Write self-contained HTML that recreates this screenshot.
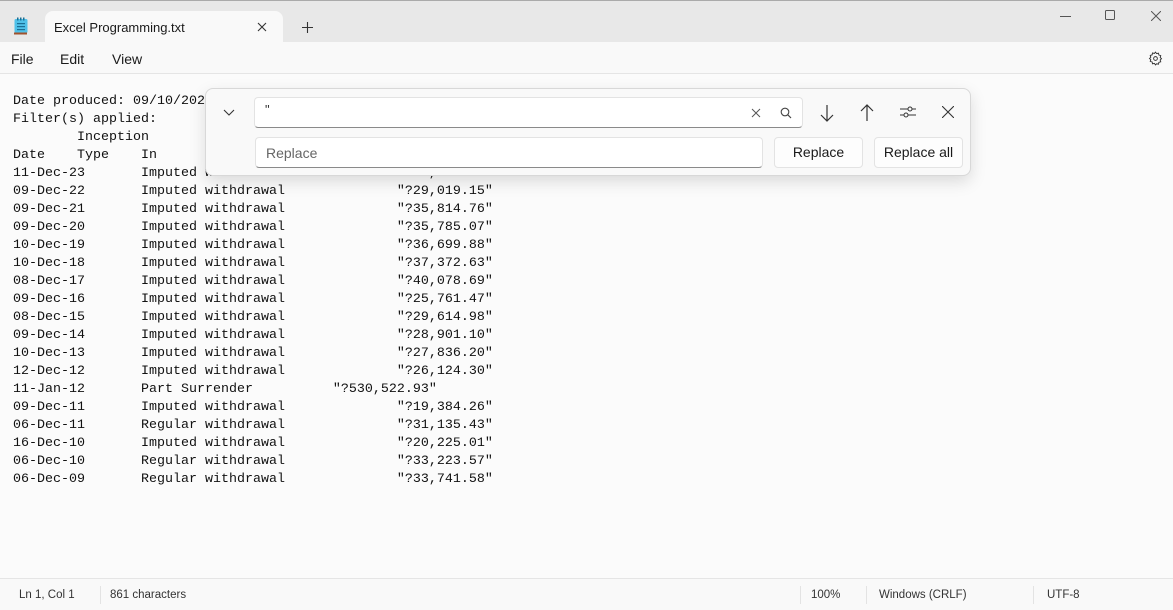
<!DOCTYPE html>
<html><head><meta charset="utf-8"><style>
*{margin:0;padding:0;box-sizing:border-box}
body{width:1173px;height:610px;overflow:hidden;background:#fbfbfb;font-family:"Liberation Sans",sans-serif;position:relative}
.tabbar{position:absolute;left:0;top:0;width:1173px;height:42px;background:#e8e8e8;border-top:1px solid #aaa}
.tab{position:absolute;left:45px;top:10px;width:238px;height:32px;background:#f9f9f9;border-radius:8px 8px 0 0}
.tab span{position:absolute;left:9px;top:9px;font-size:13px;color:#1a1a1a}
.menubar{position:absolute;left:0;top:42px;width:1173px;height:32px;background:#f9f9f9;border-bottom:1px solid #e5e5e5}
.menubar span{position:absolute;top:9px;font-size:14px;color:#1a1a1a}
pre{position:absolute;left:13px;top:93px;font-family:"Liberation Mono",monospace;font-size:13.33px;line-height:18px;color:#111}
.status{position:absolute;left:0;top:578px;width:1173px;height:32px;background:#f9f9f9;border-top:1px solid #e5e5e5;font-size:11.5px;color:#333}
.status span{position:absolute;top:10px}
.sep{position:absolute;top:7px;width:1px;height:18px;background:#e3e3e3}
.panel{position:absolute;left:205px;top:88px;width:766px;height:88px;background:#f9f9f9;border:1px solid #d8d8d8;border-radius:8px;box-shadow:0 6px 16px rgba(0,0,0,.13)}
.inp{position:absolute;background:#fff;border:1px solid #e3e3e3;border-bottom:1px solid #8a8a8a;border-radius:4px}
.btn{position:absolute;background:#fdfdfd;border:1px solid #e3e3e3;border-radius:4px;font-size:14px;color:#1a1a1a;text-align:center;line-height:29px}
</style></head><body>
<div class="tabbar">
 <svg style="position:absolute;left:14px;top:16px" width="14" height="18" viewBox="0 0 14 18"><rect x="0.5" y="2" width="13" height="14" rx="1.5" fill="#4fc1e9"/><rect x="0" y="15.5" width="13" height="2" fill="#a0522d"/><rect x="3" y="0.5" width="1.5" height="3" fill="#1b6f95"/><rect x="6" y="0.5" width="1.5" height="3" fill="#1b6f95"/><rect x="9" y="0.5" width="1.5" height="3" fill="#1b6f95"/><rect x="3" y="6" width="8" height="1.2" fill="#1b6f95"/><rect x="3" y="9" width="8" height="1.2" fill="#1b6f95"/><rect x="3" y="12" width="8" height="1.2" fill="#1b6f95"/></svg>
 <div class="tab"><span>Excel Programming.txt</span>
 <svg style="position:absolute;left:212px;top:11px" width="10" height="10" viewBox="0 0 10 10"><path d="M1 1L9 9M9 1L1 9" stroke="#333" stroke-width="1.1"/></svg></div>
 <svg style="position:absolute;left:302px;top:21px" width="11" height="11" viewBox="0 0 11 11"><path d="M5.5 0V11M0 5.5H11" stroke="#333" stroke-width="1.1"/></svg>
 <svg style="position:absolute;left:1060px;top:15px" width="11" height="2"><path d="M0 0.5H11" stroke="#555"/></svg>
 <svg style="position:absolute;left:1105px;top:9px" width="10" height="10"><rect x="0.5" y="0.5" width="9" height="9" rx="1" fill="none" stroke="#555"/></svg>
 <svg style="position:absolute;left:1151px;top:10px" width="10" height="10"><path d="M0 0L10 10M10 0L0 10" stroke="#555"/></svg>
</div>
<div class="menubar"><span style="left:11px">File</span><span style="left:60px">Edit</span><span style="left:112px">View</span>
 <svg style="position:absolute;left:1148px;top:9px" width="15" height="15" viewBox="0 0 16 16"><path d="M8 1.2l1.2 1.6 2-.5.4 2 2 .6-.6 2 1.4 1.3-1.4 1.4.6 1.9-2 .6-.4 2-2-.5L8 14.8l-1.2-1.6-2 .5-.4-2-2-.6.6-1.900L1.6 8 3 6.7l-.6-2 2-.6.4-2 2 .5z" fill="none" stroke="#333" stroke-width="1"/><circle cx="8" cy="8" r="2" fill="none" stroke="#333"/></svg>
</div>
<pre>Date produced: 09/10/2023
Filter(s) applied:
        Inception
Date    Type    In
11-Dec-23       Imputed withdrawal              "?38,554.47"
09-Dec-22       Imputed withdrawal              "?29,019.15"
09-Dec-21       Imputed withdrawal              "?35,814.76"
09-Dec-20       Imputed withdrawal              "?35,785.07"
10-Dec-19       Imputed withdrawal              "?36,699.88"
10-Dec-18       Imputed withdrawal              "?37,372.63"
08-Dec-17       Imputed withdrawal              "?40,078.69"
09-Dec-16       Imputed withdrawal              "?25,761.47"
08-Dec-15       Imputed withdrawal              "?29,614.98"
09-Dec-14       Imputed withdrawal              "?28,901.10"
10-Dec-13       Imputed withdrawal              "?27,836.20"
12-Dec-12       Imputed withdrawal              "?26,124.30"
11-Jan-12       Part Surrender          "?530,522.93"
09-Dec-11       Imputed withdrawal              "?19,384.26"
06-Dec-11       Regular withdrawal              "?31,135.43"
16-Dec-10       Imputed withdrawal              "?20,225.01"
06-Dec-10       Regular withdrawal              "?33,223.57"
06-Dec-09       Regular withdrawal              "?33,741.58"</pre>
<div class="panel">
 <svg style="position:absolute;left:17px;top:20px" width="12" height="7" viewBox="0 0 12 7"><path d="M1 1l5 5 5-5" fill="none" stroke="#333" stroke-width="1.1"/></svg>
 <div class="inp" style="left:48px;top:8px;width:549px;height:31px"><span style="position:absolute;left:10px;top:4px;font-size:13px;color:#333">"</span>
  <svg style="position:absolute;left:496px;top:10px" width="10" height="10"><path d="M1 1L9 9M9 1L1 9" stroke="#555"/></svg>
  <svg style="position:absolute;left:525px;top:9px" width="12" height="12"><circle cx="5" cy="5" r="3.8" fill="none" stroke="#444" stroke-width="1.1"/><path d="M7.8 7.8L11 11" stroke="#444" stroke-width="1.2"/></svg></div>
 <svg style="position:absolute;left:614px;top:15px" width="14" height="18" viewBox="0 0 14 18"><path d="M7 1V17M1 11l6 6 6-6" fill="none" stroke="#333" stroke-width="1.2"/></svg>
 <svg style="position:absolute;left:654px;top:15px" width="14" height="18" viewBox="0 0 14 18"><path d="M7 17V1M1 7l6-6 6 6" fill="none" stroke="#333" stroke-width="1.2"/></svg>
 <svg style="position:absolute;left:694px;top:15px" width="16" height="16" viewBox="0 0 16 16"><path d="M0 5H16M0 11H16" stroke="#333" stroke-width="1.1"/><circle cx="10" cy="5" r="2" fill="#f9f9f9" stroke="#333"/><circle cx="6" cy="11" r="2" fill="#f9f9f9" stroke="#333"/></svg>
 <svg style="position:absolute;left:736px;top:17px" width="12" height="12"><path d="M0 0L12 12M12 0L0 12" stroke="#333" stroke-width="1.1"/></svg>
 <div class="inp" style="left:49px;top:48px;width:508px;height:31px"><span style="position:absolute;left:10px;top:7px;font-size:14px;color:#666">Replace</span></div>
 <div class="btn" style="left:568px;top:48px;width:89px;height:31px">Replace</div>
 <div class="btn" style="left:668px;top:48px;width:89px;height:31px">Replace all</div>
</div>
<div class="status">
 <span style="left:19px">Ln 1, Col 1</span><div class="sep" style="left:100px"></div>
 <span style="left:110px">861 characters</span>
 <div class="sep" style="left:800px"></div><span style="left:811px">100%</span>
 <div class="sep" style="left:866px"></div><span style="left:879px">Windows (CRLF)</span>
 <div class="sep" style="left:1033px"></div><span style="left:1047px">UTF-8</span>
</div>
</body></html>
